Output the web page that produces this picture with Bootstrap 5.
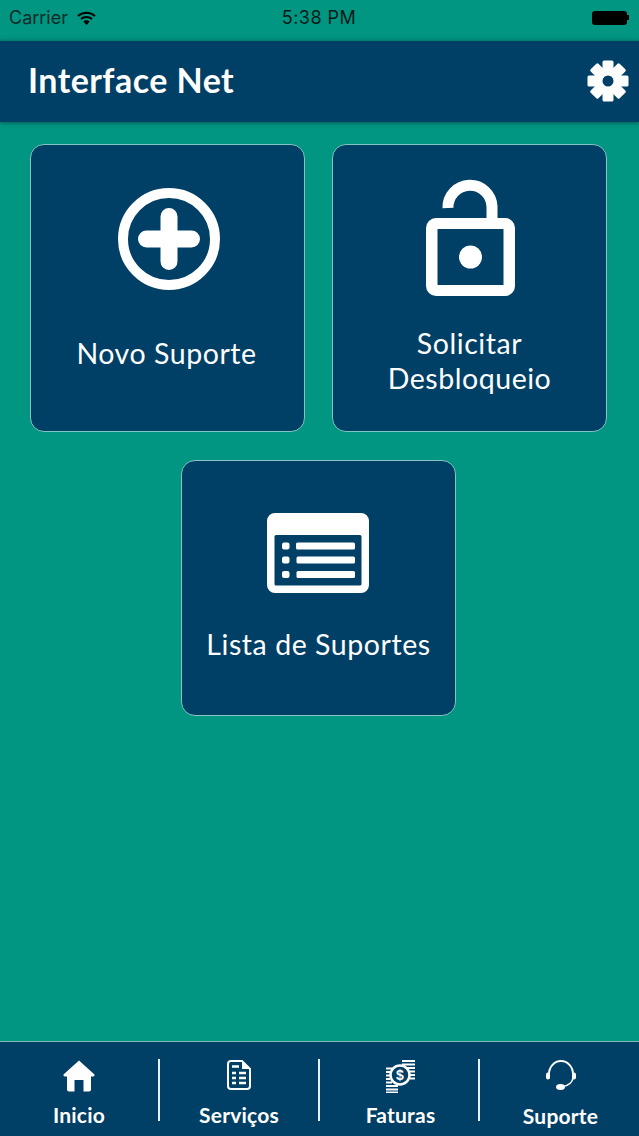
<!DOCTYPE html>
<html lang="pt-BR">
<head>
    <meta charset="UTF-8">
    <title>Interface Net</title>
    <link href="https://cdn.jsdelivr.net/npm/bootstrap@5.3.3/dist/css/bootstrap.min.css" rel="stylesheet">
    <style>
        html, body {
            height: 1136px;
            overflow: hidden;
        }
        body {
            background-color: #009682;
            font-family: "Lato", "Open Sans", sans-serif;
        }
        .app-shell {
            height: 1136px;
        }
        .status-row {
            height: 40px;
            padding: 0 10px 5px 9px;
            font-family: "Inter", "Liberation Sans", sans-serif;
            font-size: 18px;
            letter-spacing: .45px;
            color: #061a17;
        }
        .status-side {
            flex: 1 1 0;
            gap: 9px;
        }
        .status-carrier {
            color: #0b2b27;
            letter-spacing: 0;
        }
        .battery-box {
            display: block;
            width: 35px;
            height: 14px;
            background: #000;
            border-radius: 3px;
        }
        .battery-tip {
            display: block;
            width: 2px;
            height: 5px;
            background: #000;
        }
        .head-bar {
            height: 82px;
            padding: 0 10px 2px 28px;
            background: #003f66;
            border-top: 1px solid #00806f;
            box-shadow: 0 1px 4px rgba(0, 40, 50, .55);
        }
        .head-title {
            font-size: 34px;
            font-weight: 700;
            letter-spacing: .45px;
            color: #fff;
            margin: 0;
        }
        .tile-area {
            padding: 22px 2px 0 0;
            gap: 28px;
        }
        .tile-row {
            gap: 27px;
        }
        .tile-box {
            width: 275px;
            background: #003f66;
            border: 1px solid #86c4bf;
            border-radius: 14px;
            color: #fff;
            font-size: 28.500px;
            letter-spacing: .55px;
            line-height: 35px;
            text-align: center;
        }
        .tile-tall {
            height: 288px;
        }
        .tile-short {
            height: 256px;
        }
        .tile-plus {
            padding-top: 43px;
        }
        .tile-plus svg {
            margin: 0 0 46px 2px;
        }
        .tile-plus span {
            margin-right: 2px;
        }
        .tile-lock {
            padding-top: 34px;
        }
        .tile-lock svg {
            margin: 0 0 29px 2px;
        }
        .tile-list {
            padding-top: 52px;
        }
        .tile-list svg {
            margin: 0 2px 34px 0;
        }
        .tab-bar {
            height: 95px;
            margin-top: auto;
            background: #003f66;
            border-top: 1px solid #7fbcb6;
            padding-top: 17px;
            color: #fff;
        }
        .tab-item {
            flex: 0 0 158px;
            font-size: 21px;
            font-weight: 700;
            letter-spacing: .2px;
            line-height: 24px;
        }
        .tab-shift {
            padding-left: 3px;
        }
        .tab-icon {
            height: 36px;
            padding-top: 1px;
            margin-bottom: 8px;
        }
        .tab-last {
            flex: 1 1 0;
            padding-left: 2px;
        }
        .tab-last .tab-icon {
            margin-bottom: 9px;
        }
        .tab-rule {
            flex: 0 0 2px;
            height: 62px;
            background: #e8eef2;
        }
    </style>
</head>
<body>

<div class="app-shell d-flex flex-column">
    <div class="status-row d-flex align-items-center">
        <div class="status-side d-flex align-items-center">
            <span class="status-carrier">Carrier</span>
            <svg width="19" height="14" viewBox="0 0 19 14">
                <path d="M1 5 A12.5 12.5 0 0 1 18 5" fill="none" stroke="#000" stroke-width="2"/>
                <path d="M4 8 A8.2 8.2 0 0 1 15 8" fill="none" stroke="#000" stroke-width="2"/>
                <path d="M6.3 10.5 A5 5 0 0 1 12.7 10.5 L9.5 14 Z" fill="#000"/>
            </svg>
        </div>
        <span>5:38 PM</span>
        <div class="status-side d-flex align-items-center justify-content-end">
            <div class="d-flex align-items-center">
                <span class="battery-box"></span>
                <span class="battery-tip"></span>
            </div>
        </div>
    </div>

    <div class="head-bar d-flex align-items-center justify-content-between">
        <h1 class="head-title">Interface Net</h1>
        <svg width="42" height="42" viewBox="-21 -21 42 42">
            <g fill="#fff">
                <rect x="-5.500" y="-20.500" width="11" height="41" rx="1.500"/>
                <rect x="-5.500" y="-20.500" width="11" height="41" rx="1.500" transform="rotate(45)"/>
                <rect x="-5.500" y="-20.500" width="11" height="41" rx="1.500" transform="rotate(90)"/>
                <rect x="-5.500" y="-20.500" width="11" height="41" rx="1.500" transform="rotate(135)"/>
                <circle r="13.500"/>
            </g>
            <circle r="5.500" fill="#003f66"/>
        </svg>
    </div>

    <div class="tile-area d-flex flex-column align-items-center">
        <div class="tile-row d-flex">
            <div class="tile-box tile-tall tile-plus d-flex flex-column align-items-center">
                <svg width="102" height="102" viewBox="0 0 102 102">
                    <circle cx="51" cy="51" r="46" fill="none" stroke="#fff" stroke-width="10"/>
                    <path d="M28.500 51 H73.500 M51 28.500 V73.500" stroke="#fff" stroke-width="17" stroke-linecap="round"/>
                </svg>
                <span>Novo Suporte</span>
            </div>
            <div class="tile-box tile-tall tile-lock d-flex flex-column align-items-center">
                <svg width="89" height="118" viewBox="0 0 89 118">
                    <path d="M22 29 A22 22 0 0 1 66 27.500 V42" fill="none" stroke="#fff" stroke-width="11"/>
                    <path fill="#fff" fill-rule="evenodd" d="M10 39 H79 A10 10 0 0 1 89 49 V107 A10 10 0 0 1 79 117 H10 A10 10 0 0 1 0 107 V49 A10 10 0 0 1 10 39 Z M11.500 50 V106 H77.500 V50 Z"/>
                    <circle cx="44.500" cy="78" r="11.500" fill="#fff"/>
                </svg>
                <span>Solicitar<br>Desbloqueio</span>
            </div>
        </div>
        <div class="tile-box tile-short tile-list d-flex flex-column align-items-center">
            <svg width="102" height="80" viewBox="0 0 102 80">
                <path fill="#fff" fill-rule="evenodd" d="M8 0 H94 A8 8 0 0 1 102 8 V72 A8 8 0 0 1 94 80 H8 A8 8 0 0 1 0 72 V8 A8 8 0 0 1 8 0 Z M9 22 A1.500 1.500 0 0 0 7.500 23.500 V71 A1.500 1.500 0 0 0 9 72.500 H93 A1.500 1.500 0 0 0 94.500 71 V23.500 A1.500 1.500 0 0 0 93 22 Z"/>
                <g fill="#fff">
                    <rect x="15" y="29.500" width="7.500" height="7" rx="2"/>
                    <rect x="15" y="43.500" width="7.500" height="7" rx="2"/>
                    <rect x="15" y="58" width="7.500" height="7" rx="2"/>
                    <rect x="29" y="29.500" width="59" height="7" rx="1.500"/>
                    <rect x="29.500" y="43.500" width="58.500" height="7" rx="1.500"/>
                    <rect x="29.500" y="58" width="58.500" height="7" rx="1.500"/>
                </g>
            </svg>
            <span>Lista de Suportes</span>
        </div>
    </div>

    <nav class="tab-bar d-flex">
        <div class="tab-item d-flex flex-column align-items-center">
            <div class="tab-icon d-flex align-items-start">
                <svg width="32" height="32" viewBox="0 0 32 32">
                    <path fill="#fff" d="M16 0.500 L31.500 14.500 Q32 16.500 30 16.500 H28 V29.500 Q28 31.500 26 31.500 H20.500 V20 H11.500 V31.500 H6 Q4 31.500 4 29.500 V16.500 H2 Q0 16.500 0.500 14.500 Z"/>
                </svg>
            </div>
            <span>Inicio</span>
        </div>
        <span class="tab-rule"></span>
        <div class="tab-item d-flex flex-column align-items-center">
            <div class="tab-icon d-flex align-items-start">
                <svg width="24" height="30" viewBox="0 0 24 30">
                    <path d="M4 1 H15 L23 9 V26 A3 3 0 0 1 20 29 H4 A3 3 0 0 1 1 26 V4 A3 3 0 0 1 4 1 Z" fill="none" stroke="#fff" stroke-width="2"/>
                    <path d="M5 6.500 H12 M12 13 H19 M12 18 H19 M12 23 H19 M5 13 H9 M5 18 H9 M5 23 H9" stroke="#fff" stroke-width="2.500" fill="none"/>
                    <path d="M15 1 V9 H23" fill="#fff"/>
                </svg>
            </div>
            <span>Serviços</span>
        </div>
        <span class="tab-rule"></span>
        <div class="tab-item tab-shift d-flex flex-column align-items-center">
            <div class="tab-icon d-flex align-items-start">
                <svg width="31" height="33" viewBox="0 0 31 33">
                    <path d="M17 1 H30 M17 4.500 H30 M17 8 H30 M22 11.500 H30 M25 15 H30 M25 18.500 H30 M1 8.500 H12 M1 12 H7 M1 15.500 H5 M1 19 H5 M1 22.500 H7 M1 26 H13 M1 29.500 H13 M1 32.500 H13" stroke="#fff" stroke-width="2.200" fill="none"/>
                    <circle cx="15" cy="15" r="9.500" fill="#003f66" stroke="#fff" stroke-width="2.500"/>
                    <text x="15" y="20" text-anchor="middle" fill="#fff" font-size="14" font-weight="700" font-family="Liberation Sans, sans-serif">$</text>
                </svg>
            </div>
            <span>Faturas</span>
        </div>
        <span class="tab-rule"></span>
        <div class="tab-item tab-last d-flex flex-column align-items-center">
            <div class="tab-icon d-flex align-items-start">
                <svg width="32" height="31" viewBox="0 0 32 31">
                    <path d="M4 14 A12 13 0 0 1 28 14" fill="none" stroke="#fff" stroke-width="2"/>
                    <path d="M28 18 Q27 25 17 27" fill="none" stroke="#fff" stroke-width="1.600"/>
                    <rect x="1" y="12.500" width="4" height="7" rx="2" fill="#fff"/>
                    <rect x="27" y="12.500" width="4" height="7" rx="2" fill="#fff"/>
                    <ellipse cx="15.500" cy="27" rx="4.500" ry="3" fill="#fff"/>
                </svg>
            </div>
            <span>Suporte</span>
        </div>
    </nav>
</div>

<script src="https://cdn.jsdelivr.net/npm/bootstrap@5.3.3/dist/js/bootstrap.bundle.min.js"></script>
</body>
</html>
